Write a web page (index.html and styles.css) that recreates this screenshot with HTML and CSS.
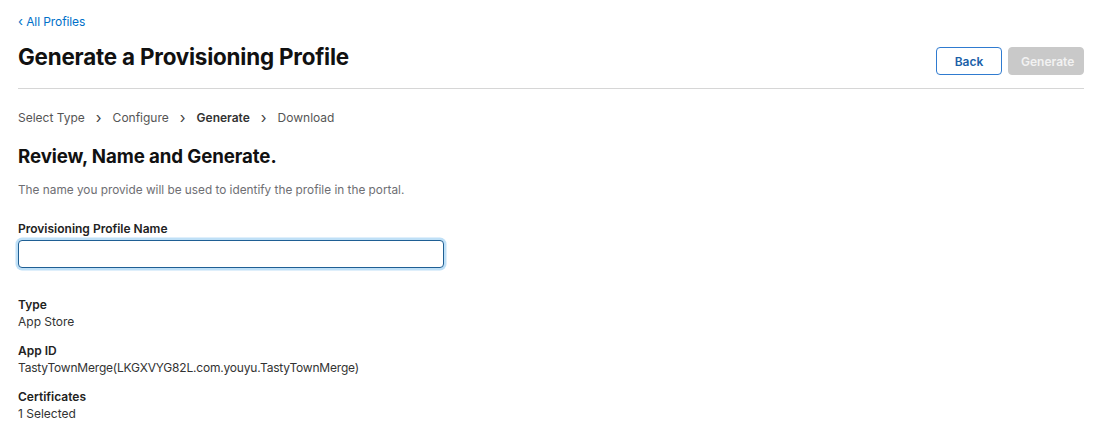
FILE: index.html
```html
<!DOCTYPE html>
<html>
<head>
<meta charset="utf-8">
<link rel="stylesheet" href="styles.css">
</head>
<body>
<div class="page">
  <a class="back-link" href="#"><span class="chev">‹</span> All Profiles</a>
  <div class="header">
    <h1 class="title">Generate a Provisioning Profile</h1>
    <div class="actions">
      <button class="btn btn-outline">Back</button>
      <button class="btn btn-disabled">Generate</button>
    </div>
  </div>
  <nav class="steps">
    <span class="step">Select Type</span>
    <span class="sep">›</span>
    <span class="step">Configure</span>
    <span class="sep">›</span>
    <span class="step current">Generate</span>
    <span class="sep">›</span>
    <span class="step">Download</span>
  </nav>
  <h2 class="section-title">Review, Name and Generate.</h2>
  <p class="desc">The name you provide will be used to identify the profile in the portal.</p>
  <label class="field-label">Provisioning Profile Name</label>
  <input class="text-input" type="text">
  <dl class="details">
    <dt>Type</dt>
    <dd>App Store</dd>
    <dt>App ID</dt>
    <dd class="tight">TastyTownMerge(LKGXVYG82L.com.youyu.TastyTownMerge)</dd>
    <dt>Certificates</dt>
    <dd>1 Selected</dd>
  </dl>
</div>
</body>
</html>
```
FILE: styles.css
```css
* { box-sizing: border-box; }
html, body { margin: 0; padding: 0; background: #fff; }
body {
  font-family: Inter, "Liberation Sans", sans-serif;
  color: #1d1d1f;
  -webkit-font-smoothing: antialiased;
}
.page {
  padding: 13px 16px 0 18px;
  display: flex;
  flex-direction: column;
  align-items: flex-start;
}
.back-link {
  font-size: 12px;
  line-height: 16px;
  color: #0070c9;
  text-decoration: none;
  letter-spacing: -0.1px;
}
.chev { font-size: 13px; }
.header {
  width: 100%;
  display: flex;
  justify-content: space-between;
  align-items: flex-start;
  padding: 13px 0 13px;
  border-bottom: 1px solid #d6d6d6;
}
.title {
  margin: 0;
  font-size: 22.4px;
  line-height: 28px;
  font-weight: 700;
  letter-spacing: -0.2px;
  color: #111;
}
.actions {
  display: flex;
  gap: 6px;
  margin-top: 4px;
}
.btn {
  height: 28px;
  font-family: inherit;
  font-size: 12px;
  font-weight: 600;
  border-radius: 4px;
  padding: 0 12px;
}
.btn-outline {
  width: 66px;
  background: #fff;
  color: #1a5fa8;
  border: 1px solid #2f7bd0;
}
.btn-disabled {
  width: 76px;
  background: #c9c9c9;
  color: #f2f2f2;
  border: 1px solid #c9c9c9;
}
.steps {
  display: flex;
  align-items: center;
  margin-top: 21px;
  font-size: 12px;
  line-height: 16px;
  color: #555;
}
.sep {
  font-size: 15px;
  margin: 0 11px;
  color: #444;
}
.current { font-weight: 600; color: #333; }
.section-title {
  margin: 19px 0 0;
  font-size: 18.7px;
  line-height: 24px;
  font-weight: 700;
  color: #111;
  letter-spacing: -0.1px;
}
.desc {
  margin: 13px 0 0;
  font-size: 11.8px;
  line-height: 16px;
  color: #6e6e73;
}
.field-label {
  margin-top: 23px;
  font-size: 12px;
  line-height: 16px;
  font-weight: 600;
  color: #222;
}
.text-input {
  margin-top: 3px;
  width: 426px;
  height: 28px;
  border: 1.5px solid #1f5f94;
  border-radius: 4px;
  box-shadow: 0 0 0 2.5px #bfe0f7;
  outline: none;
}
.details {
  margin: 29px 0 0;
  font-size: 12px;
  line-height: 16px;
}
.details dt {
  font-weight: 600;
  color: #222;
}
.details dd {
  margin: 1px 0 13px;
  color: #333;
}
.details dd.tight { letter-spacing: -0.2px; }
```
